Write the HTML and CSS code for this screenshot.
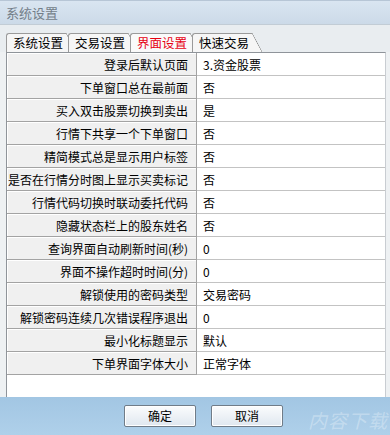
FILE: index.html
```html
<!DOCTYPE html>
<html>
<head>
<meta charset="UTF-8" />
<title>系统设置</title>
<link rel="stylesheet" href="styles.css">
</head>
<body>
<div class="window">
    <div class="titlebar">系统设置</div>
    <div class="tabbar">
        <div class="tab">系统设置</div>
        <div class="tab">交易设置</div>
        <div class="tab active">界面设置</div>
        <div class="tab">快速交易</div>
    </div>
    <div class="page">
        <div class="grid">
            <div class="label">登录后默认页面</div><div class="value">3.资金股票</div>
            <div class="label">下单窗口总在最前面</div><div class="value">否</div>
            <div class="label">买入双击股票切换到卖出</div><div class="value">是</div>
            <div class="label">行情下共享一个下单窗口</div><div class="value">否</div>
            <div class="label">精简模式总是显示用户标签</div><div class="value">否</div>
            <div class="label">是否在行情分时图上显示买卖标记</div><div class="value">否</div>
            <div class="label">行情代码切换时联动委托代码</div><div class="value">否</div>
            <div class="label">隐藏状态栏上的股东姓名</div><div class="value">否</div>
            <div class="label">查询界面自动刷新时间(秒)</div><div class="value">0</div>
            <div class="label">界面不操作超时时间(分)</div><div class="value">0</div>
            <div class="label">解锁使用的密码类型</div><div class="value">交易密码</div>
            <div class="label">解锁密码连续几次错误程序退出</div><div class="value">0</div>
            <div class="label">最小化标题显示</div><div class="value">默认</div>
            <div class="label">下单界面字体大小</div><div class="value">正常字体</div>
        </div>
    </div>
    <div class="buttons">
        <button class="btn">确定</button>
        <button class="btn">取消</button>
        <span class="mark">内容下载</span>
    </div>
</div>
</body>
</html>
```

FILE: styles.css
```css
html, body{
    margin:0px;
    padding:0px;
}
body {
    width:390px;
    height:435px;
    overflow:hidden;
    font: 12px/1 "Noto Sans CJK SC", "Noto Sans", sans-serif;
    color:#000;
    background:#a9cbe6;
}

.window{
    display:flex;
    flex-direction:column;
    height:435px;
    background:#e8edf1;
    position:relative;
}

/* title bar */
.titlebar{
    height:25px;
    box-sizing:border-box;
    padding:5px 0 0 6px;
    font-size:13px;
    color:#737e89;
    background:linear-gradient(#d9e5f1, #ccdae8);
    border-top:1px solid #b7c6d6;
    border-bottom:1px solid #c2ccd5;
}

/* tabs */
.tabbar{
    height:27px;
    box-sizing:border-box;
    padding:8px 0 0 6px;
    display:flex;
    gap:2px;
    background:#e9edf0;
}
.tab{
    position:relative;
    width:60px;
    height:19px;
    box-sizing:border-box;
    padding:3px 0 0 6px;
    font-size:12.5px;
    background:#f6f6f6;
    border-left:1px solid #9a9a9a;
    border-top:1px solid #9a9a9a;
    border-radius:3px 0 0 0;
}
.tab::after{
    content:'';
    position:absolute;
    top:-1px;
    right:-10px;
    width:10px;
    height:19px;
    background:linear-gradient(to top right, #f6f6f6 calc(50% - 0.6px), #8f8f8f 50%, transparent calc(50% + 0.6px));
}
.tab.active{
    color:#e60012;
    background:#fafafa;
}

/* grid */
.page{
    height:345px;
    padding:0 2px 0 6px;
    background:#eef1f3;
}
.grid{
    height:345px;
    box-sizing:border-box;
    display:grid;
    grid-template-columns:190px 1fr;
    grid-auto-rows:23px;
    align-content:start;
    background:#fff;
    border-left:1px solid #8f949a;
    border-top:1px solid #8f949a;
    border-right:1px solid #c9cdd2;
    margin-right:2px;
}
.label, .value{
    box-sizing:border-box;
    display:flex;
    align-items:center;
    padding-top:1px;
}
.label{
    justify-content:flex-end;
    padding-right:8px;
    background:#f0f0f0;
    border-right:1px solid #a3a3a3;
    border-bottom:1px solid #a3a3a3;
    box-shadow:inset 1px 1px 0 #fff;
    white-space:nowrap;
}
.value{
    padding-left:6px;
    border-bottom:1px solid #c3c3c3;
}

/* bottom buttons */
.buttons{
    flex:1;
    display:flex;
    gap:15px;
    padding:8px 0 0 124px;
    background:linear-gradient(#a2c6e3, #afd0ea);
}
.btn{
    width:72px;
    height:22px;
    padding:0px;
    font:12px/1 "Noto Sans CJK SC", "Noto Sans", sans-serif;
    color:#000;
    background:linear-gradient(#fbfcfd, #dfe7ef);
    border:1px solid #707c88;
    border-radius:2px;
    box-shadow:inset 0 0 0 1px #ffffff;
}
.mark{
    position:absolute;
    right:2px;
    bottom:6px;
    font-size:19px;
    font-style:italic;
    letter-spacing:1px;
    color:rgba(255,255,255,0.3);
}
```
